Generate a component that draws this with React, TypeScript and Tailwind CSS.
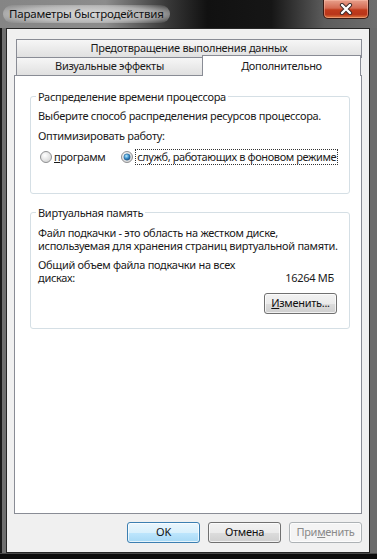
import React from 'react'

// ── Radio button ──────────────────────────────────────────────────────────────

function Radio({ checked }: { checked?: boolean }) {
  return (
    <svg width="12" height="12" viewBox="0 0 12 12" className="shrink-0">
      <defs>
        <radialGradient id="radioBg" cx="40%" cy="35%" r="70%">
          <stop offset="0%" stopColor="#ffffff" />
          <stop offset="100%" stopColor="#d4d4d4" />
        </radialGradient>
        <radialGradient id="radioDot" cx="40%" cy="35%" r="70%">
          <stop offset="0%" stopColor="#b8ecff" />
          <stop offset="55%" stopColor="#3a8fcb" />
          <stop offset="100%" stopColor="#1b4f80" />
        </radialGradient>
      </defs>
      <circle cx="6" cy="6" r="5.5" fill="url(#radioBg)" stroke="#8f9092" strokeWidth="1" />
      {checked && <circle cx="6" cy="6" r="3.2" fill="url(#radioDot)" stroke="#2a5e8c" strokeWidth="0.5" />}
    </svg>
  )
}

// ── Push button ───────────────────────────────────────────────────────────────

function Btn({
  children,
  kind = 'normal',
  className = '',
}: {
  children: React.ReactNode
  kind?: 'normal' | 'default' | 'disabled'
  className?: string
}) {
  const look =
    kind === 'default'
      ? 'border-[#3c7fb1] bg-[linear-gradient(#eaf6fd_0%,#d9f0fc_50%,#bee6fd_50%,#a7d9f5_100%)] text-[#111]'
      : kind === 'disabled'
        ? 'border-[#adb2b5] bg-[#f4f4f4] text-[#8a8a8a]'
        : 'border-[#707070] bg-[linear-gradient(#f2f2f2_0%,#ebebeb_50%,#dddddd_50%,#cfcfcf_100%)] text-[#111]'
  return (
    <div
      className={`h-[21px] w-[73px] flex items-center justify-center rounded-[3px] border shadow-[inset_0_0_0_1px_rgba(255,255,255,0.7)] ${look} ${className}`}
    >
      {children}
    </div>
  )
}

// ── Group box ─────────────────────────────────────────────────────────────────

function Group({ title, className = '', children }: { title: string; className?: string; children: React.ReactNode }) {
  return (
    <div className={`ml-[15px] w-[320px] border border-[#d5dfe5] rounded-[3px] flex flex-col ${className}`}>
      <div className="-mt-[7px] ml-[5px] w-fit bg-white px-[2px] leading-[14px]">{title}</div>
      {children}
    </div>
  )
}

export default function App() {
  return (
    <div className="w-[377px] h-[559px] flex flex-col bg-[#101010] font-['Noto_Sans',sans-serif] text-[11px] tracking-[-0.3px] text-[#1a1a1a]">
      {/* Title bar */}
      <div className="h-[28px] flex items-start bg-[linear-gradient(90deg,#858585_0%,#8c8c8c_28%,#3a3a3a_44%,#111111_55%,#161616_72%,#5c5c5c_86%,#6e6e6e_100%)]">
        <div className="mt-[5px] ml-[3px] px-[6px] h-[18px] flex items-center rounded-[9px] bg-[radial-gradient(ellipse_at_center,rgba(225,225,225,0.9)_0%,rgba(205,205,205,0.7)_60%,rgba(190,190,190,0)_100%)] text-[11.5px] tracking-[-0.2px] text-[#111]">
          Параметры быстродействия
        </div>
        <div className="ml-auto mr-[8px] w-[46px] h-[19px] flex items-center justify-center rounded-b-[5px] border border-t-0 border-[#3a1a14] bg-[linear-gradient(#e8a08c_0%,#d46a52_45%,#c13b1c_55%,#b9351a_80%,#e07a3f_100%)] shadow-[inset_0_0_0_1px_rgba(255,200,180,0.45)]">
          <svg width="14" height="12" viewBox="0 0 14 12">
            <path d="M3 2 L11 10 M11 2 L3 10" stroke="#3b2a28" strokeWidth="4.2" strokeLinecap="round" />
            <path d="M3 2 L11 10 M11 2 L3 10" stroke="#ffffff" strokeWidth="2.4" strokeLinecap="round" />
          </svg>
        </div>
      </div>

      {/* Frame + client */}
      <div className="flex flex-1">
        <div className="w-[6px] border-l-2 border-[#1a1a1a] bg-[#6f6f6f]" />
        <div className="flex-1 flex flex-col border border-[#262626] bg-[#f0f0f0]">
          {/* Tabs */}
          <div className="mx-[7px] mt-[10px] flex flex-col">
            <div className="ml-[2px] w-[346px] h-[19px] border border-[#898c95] bg-[linear-gradient(#f6f6f6,#e0e0e0)] flex items-center justify-center">
              Предотвращение выполнения данных
            </div>
            <div className="ml-[2px] flex items-start">
              <div className="w-[187px] h-[17px] border-x border-[#898c95] bg-[linear-gradient(#f6f6f6,#e0e0e0)] flex items-center justify-center">
                Визуальные эффекты
              </div>
              <div className="relative z-10 -ml-px -mt-[3px] -mb-px w-[159px] h-[21px] border border-b-0 border-[#898c95] bg-white flex items-center justify-center">
                Дополнительно
              </div>
            </div>

            {/* Panel */}
            <div className="h-[439px] border border-[#898c95] bg-white flex flex-col">
              <Group title="Распределение времени процессора" className="mt-[20px] h-[98px]">
                <div className="ml-[7px] mt-[5px] leading-[14px] whitespace-nowrap">
                  Выберите способ распределения ресурсов процессора.
                </div>
                <div className="ml-[7px] mt-[6px] leading-[14px]">Оптимизировать работу:</div>
                <div className="mt-[6px] h-[16px] flex items-center whitespace-nowrap tracking-[-0.4px]">
                  <div className="ml-[9px]">
                    <Radio />
                  </div>
                  <div className="ml-[2px] leading-[14px]">
                    <span className="underline">п</span>рограмм
                  </div>
                  <div className="ml-[16px]">
                    <Radio checked />
                  </div>
                  <div className="ml-[3px] px-[1px] leading-[14px] outline outline-1 outline-dotted outline-[#333]">
                    служб, работающих в фоновом режиме
                  </div>
                </div>
              </Group>

              <Group title="Виртуальная память" className="mt-[18px] h-[117px]">
                <div className="ml-[7px] mt-[6px] flex flex-col leading-[13px] whitespace-nowrap">
                  <div>Файл подкачки - это область на жестком диске,</div>
                  <div>используемая для хранения страниц виртуальной памяти.</div>
                </div>
                <div className="ml-[7px] mr-[15px] mt-[6px] flex flex-col leading-[13px] whitespace-nowrap">
                  <div>Общий объем файла подкачки на всех</div>
                  <div className="flex justify-between">
                    <span>дисках:</span>
                    <span>16264 МБ</span>
                  </div>
                </div>
                <Btn className="mt-[9px] self-end mr-[12px]">
                  <span className="underline">И</span>зменить...
                </Btn>
              </Group>
            </div>
          </div>

          {/* Dialog buttons */}
          <div className="mt-[8px] mr-[7px] flex justify-end gap-[8px]">
            <Btn kind="default">OK</Btn>
            <Btn>Отмена</Btn>
            <Btn kind="disabled">
              При<span className="underline">м</span>енить
            </Btn>
          </div>
        </div>
        <div className="w-[7px] bg-[#6b6b6b]" />
      </div>
      <div className="h-[6px] bg-[#0c0c0c] border-t border-[#4a4a4a]" />
    </div>
  )
}
